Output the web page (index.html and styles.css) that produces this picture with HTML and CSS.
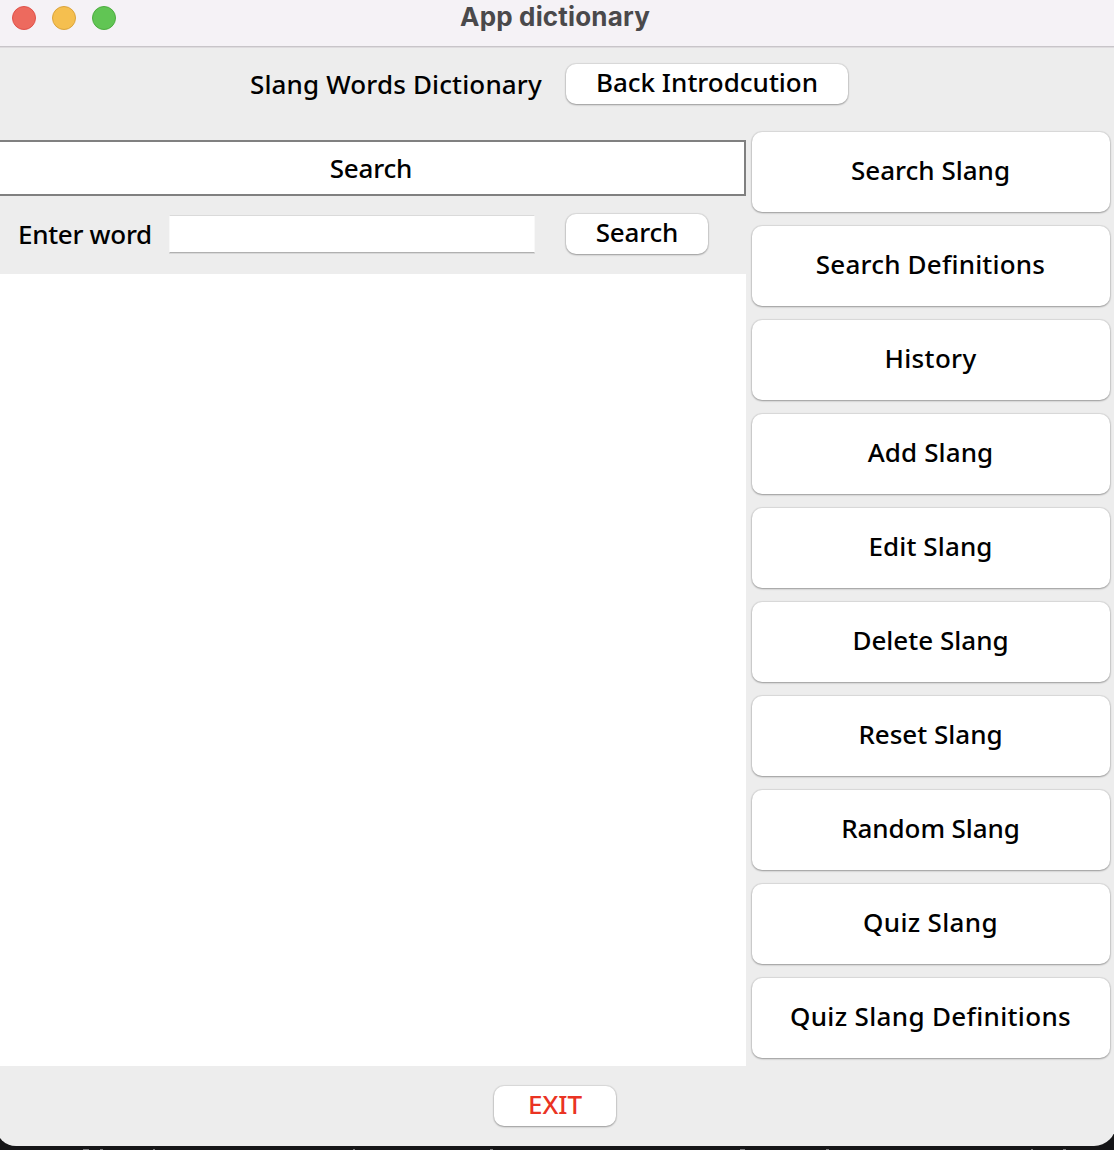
FILE: index.html
```html
<!DOCTYPE html>
<html lang="en">
<head>
<meta charset="utf-8">
<title>App dictionary</title>
<link rel="stylesheet" href="styles.css">
</head>
<body>
<div class="window">
  <div class="titlebar">
    <div class="lights">
      <span class="light close"></span>
      <span class="light minimize"></span>
      <span class="light zoom"></span>
    </div>
    <h1 class="title"><span>App dictionary</span></h1>
  </div>
  <header class="header">
    <span class="label">Slang Words Dictionary</span>
    <button class="btn back"><span>Back Introdcution</span></button>
  </header>
  <div class="body">
    <main class="main">
      <div class="banner"><span>Search</span></div>
      <form class="query">
        <label class="label" for="word">Enter word</label>
        <input class="field" id="word" type="text">
        <button class="btn search" type="button"><span>Search</span></button>
      </form>
      <div class="results"></div>
    </main>
    <nav class="menu">
      <button class="btn item"><span>Search Slang</span></button>
      <button class="btn item loose"><span>Search Definitions</span></button>
      <button class="btn item looser"><span>History</span></button>
      <button class="btn item open"><span>Add Slang</span></button>
      <button class="btn item open"><span>Edit Slang</span></button>
      <button class="btn item"><span>Delete Slang</span></button>
      <button class="btn item"><span>Reset Slang</span></button>
      <button class="btn item snug"><span>Random Slang</span></button>
      <button class="btn item looser"><span>Quiz Slang</span></button>
      <button class="btn item looser"><span>Quiz Slang Definitions</span></button>
    </nav>
  </div>
  <footer class="footer">
    <button class="btn exit"><span>EXIT</span></button>
  </footer>
</div>
<svg class="backdrop" width="1114" height="4" viewBox="0 0 1114 4" aria-hidden="true">
  <path fill="#77777a" d="M83 3h6v1h-6zM100 3h3v1h-3zM153 3h2v1h-2zM353 3h2v1h-2zM490 3h3v1h-3zM740 3h5v1h-5zM826 3h3v1h-3zM1031 3h2v1h-2zM1063 3h3v1h-3z"/>
</svg>
</body>
</html>
```

FILE: styles.css
```css
* { box-sizing: border-box; }
body {
  margin: 0;
  height: 1150px;
  overflow: hidden;
  background: #151517;
  color: #000;
  font: 500 26px/40px "Noto Sans", sans-serif;
}
.window {
  height: 1146px;
  margin: 0 -2px 0 -4px;
  padding: 0 2px 0 4px;
  display: flex;
  flex-direction: column;
  background: #ededed;
  border-radius: 0 0 22px 20px;
}
.backdrop { display: block; }
.titlebar {
  height: 48px;
  margin: 0 -2px 0 -4px;
  padding: 6px 2px 0 16px;
  display: grid;
  grid-template-columns: 104px 1fr 120px;
  background: #f5f2f6;
  border-bottom: 1px solid #dedbde;
  box-shadow: inset 0 -1px #c8c5c9;
}
.lights { display: flex; gap: 16px; }
.light { width: 24px; height: 24px; border-radius: 50%; border: 1px solid; }
.close { background: #ed6a5e; border-color: #e0524a; }
.minimize { background: #f5bf4f; border-color: #dba43c; }
.zoom { background: #61c554; border-color: #4dad40; }
.title {
  margin: 0;
  text-align: center;
  font: 700 26px/22px Inter, sans-serif;
  letter-spacing: .17px;
  color: #4a494b;
}
.header { height: 84px; padding: 16px 0 0 250px; display: flex; }
.header .label { width: 316px; letter-spacing: .14px; }
.label { white-space: nowrap; }
.btn {
  padding: 0 0 4px;
  border: 0;
  border-radius: 10px;
  background: #fff;
  color: inherit;
  font: inherit;
  line-height: 36px;
  white-space: nowrap;
  box-shadow: 0 0 1px 1px rgba(0,0,0,.08), 0 1px 2px rgba(0,0,0,.3);
}
.back { width: 282px; height: 40px; }
.body { height: 934px; display: flex; }
.main { width: 746px; padding-top: 8px; display: flex; flex-direction: column; }
.banner {
  height: 56px;
  border: 2px solid #808080;
  border-left: 0;
  background: #fff;
  text-align: center;
  line-height: 53px;
  letter-spacing: -.2px;
  padding-right: 2px;
}
.query { height: 78px; padding: 18px 38px 0 18px; display: flex; }
.query .label { width: 152px; letter-spacing: -.3px; }
.field {
  width: 366px;
  height: 38px;
  margin: 1px 31px 0 -1px;
  border: 1px solid #f8f8f8;
  border-top-color: #dadada;
  border-bottom-color: #b0b0b0;
  background: #fff;
  box-shadow: 0 1px #d8d8d8;
}
.search { width: 142px; height: 40px; letter-spacing: -.2px; }
.results { flex: 1; background: #fff; }
.menu { flex: 1; padding: 0 4px 0 6px; display: flex; flex-direction: column; gap: 14px; }
.item { height: 80px; padding-right: 1px; }
.snug { letter-spacing: -.08px; }
.open { letter-spacing: .12px; }
.loose { letter-spacing: .2px; }
.looser { letter-spacing: .34px; }
.footer { padding-top: 20px; padding-right: 4px; text-align: center; font-size: 0; }
.exit { width: 122px; height: 40px; font-size: 26px; color: #ea3323; }
```
